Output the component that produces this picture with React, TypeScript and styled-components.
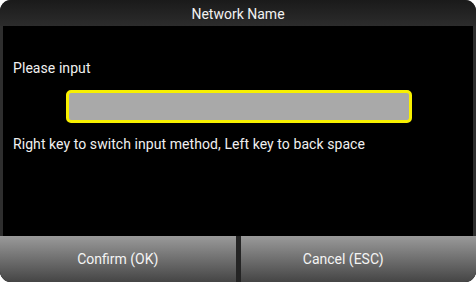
import React from "react";
import styled, { createGlobalStyle } from "styled-components";

const GlobalStyle = createGlobalStyle`
  html, body {
    margin: 0;
    padding: 0;
    background: #ffffff;
  }
  body {
    font-family: Roboto, "Liberation Sans", sans-serif;
  }
`;

const Dialog = styled.div`
  width: 476px;
  height: 282px;
  display: flex;
  flex-direction: column;
  border-radius: 11px;
  overflow: hidden;
  background: #2e2e2e;
`;

const TitleBar = styled.div`
  height: 26px;
  padding-top: 2px;
  box-sizing: border-box;
  display: flex;
  align-items: center;
  justify-content: center;
  background: linear-gradient(#1a1a1a, #2c2c2c);
  color: #f2f2f2;
  font-size: 14px;
`;

const Body = styled.div`
  flex: 1;
  margin: 0 3px;
  background: #000;
  display: flex;
  flex-direction: column;
  padding: 33px 0 0 10px;
  color: #f0f0f0;
  font-size: 14px;
  letter-spacing: 0.07px;
`;

const Label = styled.div`
  line-height: 18px;
`;

const InputBox = styled.div`
  margin: 13px 0 0 53px;
  width: 340px;
  height: 27px;
  border: 3px solid #f8f000;
  border-radius: 5px;
  background: #a9a9a9;
`;

const Hint = styled.div`
  margin-top: 12px;
  line-height: 18px;
`;

const ButtonRow = styled.div`
  height: 46px;
  display: flex;
  gap: 5px;
  background: #242424;
`;

const Button = styled.button`
  flex: 1;
  border: none;
  padding: 0;
  background: linear-gradient(#9a9a9a, #454545);
  color: #f4f4f4;
  font-family: inherit;
  font-size: 14px;
  cursor: pointer;
`;

const Caption = styled.span<{ $shift?: number }>`
  display: inline-block;
  margin-right: ${({ $shift }) => ($shift ? $shift * 2 : 0)}px;
`;

export default function App() {
  return (
    <>
      <GlobalStyle />
      <Dialog>
        <TitleBar>Network Name</TitleBar>
        <Body>
          <Label>Please input</Label>
          <InputBox />
          <Hint>Right key to switch input method, Left key to back space</Hint>
        </Body>
        <ButtonRow>
          <Button>
            <Caption>Confirm (OK)</Caption>
          </Button>
          <Button>
            <Caption $shift={15}>Cancel (ESC)</Caption>
          </Button>
        </ButtonRow>
      </Dialog>
    </>
  );
}
